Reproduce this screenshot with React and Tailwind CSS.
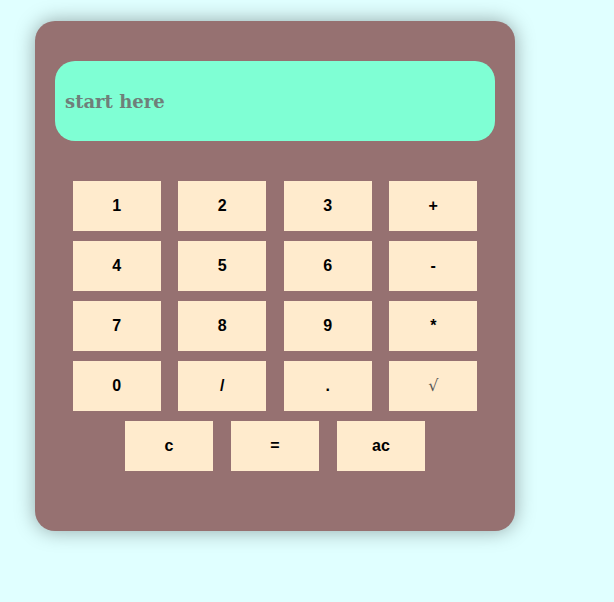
import React from 'react';

const rows = [
  ['1', '2', '3', '+'],
  ['4', '5', '6', '-'],
  ['7', '8', '9', '*'],
  ['0', '/', '.', '√'],
  ['c', '=', 'ac'],
];

const App = () => {
  return (
    <div className="min-h-screen w-full bg-[#e0ffff] pt-[21px] pl-[35px]">
      <div className="w-[480px] h-[510px] rounded-[20px] bg-[#967171] shadow-[0_0_20px_rgba(0,0,0,0.35)] pt-[40px]">
        <div className="mx-[20px] h-[80px] rounded-[20px] bg-[#7fffd4] flex items-center pl-[10px]">
          <span className="text-[18px] font-bold text-[#6f7f7a]" style={{ fontFamily: '"DejaVu Serif", Georgia, serif' }}>
            start here
          </span>
        </div>

        {/* keypad */}
        <div className="mt-[40px] flex flex-col gap-[10px]">
          {rows.map((row, i) => (
            <div key={i} className={`flex justify-center ${row.length === 3 ? 'gap-[18px]' : 'gap-[17.5px]'}`}>
              {row.map((k) => (
                <button
                  key={k}
                  className={`w-[88px] h-[50px] bg-[#ffebcd] text-[16px] ${k === '√' ? 'font-normal text-[#555]' : 'font-bold text-black'}`}
                  style={{ fontFamily: k === '√' ? '"DejaVu Serif", serif' : '"Liberation Sans", Arial, sans-serif' }}
                >
                  {k}
                </button>
              ))}
            </div>
          ))}
        </div>
      </div>
    </div>
  );
};

export default App;
